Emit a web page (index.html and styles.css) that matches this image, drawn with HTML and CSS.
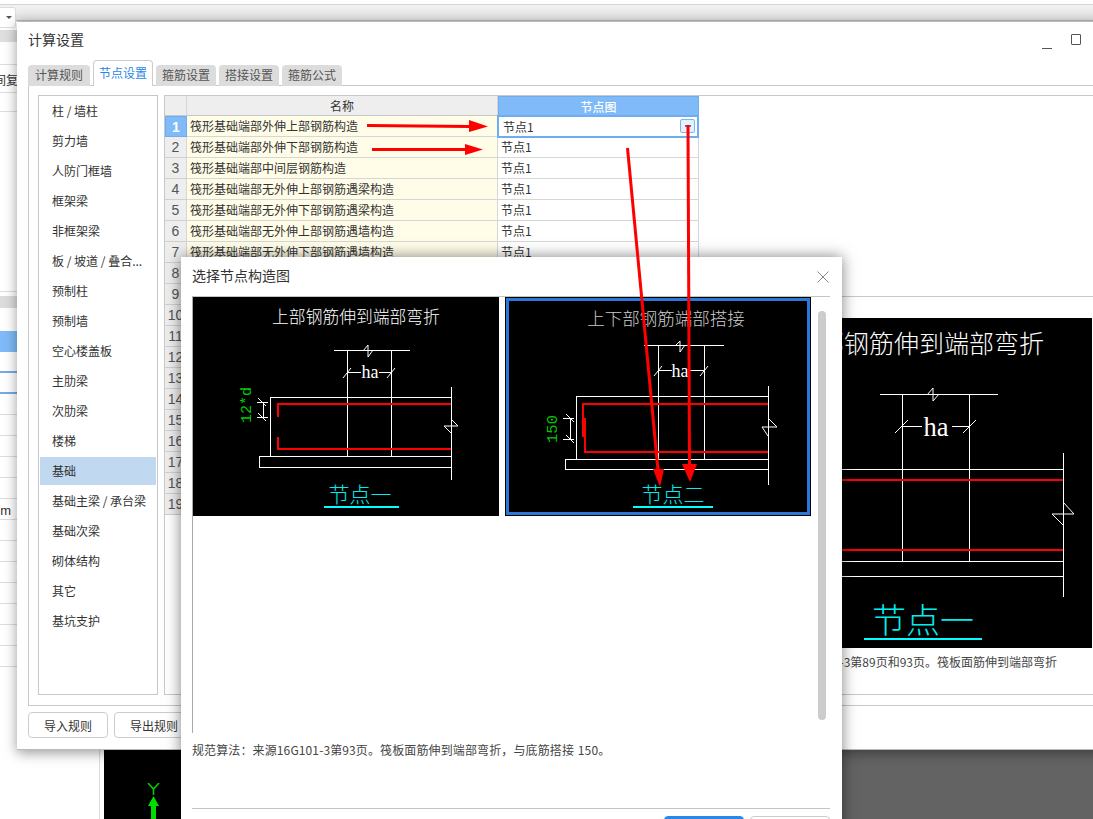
FILE: index.html
```html
<!DOCTYPE html>
<html lang="zh">
<head>
<meta charset="utf-8">
<title>计算设置</title>
<link rel="stylesheet" href="styles.css">
</head>
<body>
<div class="app">
  <div class="app-top"></div>
  <div class="app-dropdown"><span class="caret"></span></div>
  <div class="app-middle">
    <div class="side-table">
      <div class="st st-12"></div>
      <div class="st st-head"></div>
      <div class="st st-23"></div>
      <div class="st st-28">间复</div>
      <div class="st st-19"></div>
      <div class="st st-180"></div>
      <div class="st st-gap4"></div>
      <div class="st st-head2"></div>
      <div class="st st-gap23"></div>
      <div class="st st-sel"></div>
      <div class="st st-blue"></div>
      <div class="st st-blue"></div>
      <div class="st st-r"></div>
      <div class="st st-r"></div>
      <div class="st st-r"></div>
      <div class="st st-r"></div>
      <div class="st st-r"></div>
      <div class="st st-r st-unit">mm</div>
      <div class="st st-r"></div>
      <div class="st st-r"></div>
      <div class="st st-r"></div>
      <div class="st st-r"></div>
      <div class="st st-r"></div>
      <div class="st st-r"></div>
      <div class="st st-r"></div>
    </div>
  </div>
  <div class="app-bottom">
    <div class="bottom-left"></div>
    <div class="canvas-black">
      <svg class="axis" width="20" height="40" viewBox="0 0 20 40">
        <path class="axis-y" d="M4 0 L9.5 6 L15 0 M9.5 6 V12"/>
        <path class="axis-head" d="M9.5 13 L15 23 H12 V40 H7 V23 H4 Z"/>
      </svg>
    </div>
    <div class="canvas-gray"></div>
  </div>

  <section class="dlg-settings">
    <header class="dlg-head">
      <h1 class="dlg-title">计算设置</h1>
      <div class="win-btns">
        <span class="win-min"></span>
        <span class="win-max"></span>
      </div>
    </header>
    <nav class="tabs">
      <span class="tab">计算规则</span>
      <span class="tab tab-active">节点设置</span>
      <span class="tab">箍筋设置</span>
      <span class="tab">搭接设置</span>
      <span class="tab">箍筋公式</span>
    </nav>
    <div class="tab-body">
      <ul class="cats">
        <li>柱 / 墙柱</li>
        <li>剪力墙</li>
        <li>人防门框墙</li>
        <li>框架梁</li>
        <li>非框架梁</li>
        <li>板 / 坡道 / 叠合...</li>
        <li>预制柱</li>
        <li>预制墙</li>
        <li>空心楼盖板</li>
        <li>主肋梁</li>
        <li>次肋梁</li>
        <li>楼梯</li>
        <li class="cat-active">基础</li>
        <li>基础主梁 / 承台梁</li>
        <li>基础次梁</li>
        <li>砌体结构</li>
        <li>其它</li>
        <li>基坑支护</li>
      </ul>
      <div class="panel">
        <div class="grid">
          <div class="gh gh-corner"></div>
          <div class="gh">名称</div>
          <div class="gh gh-active">节点图</div>

          <div class="gn gn-active">1</div>
          <div class="gc">筏形基础端部外伸上部钢筋构造</div>
          <div class="gv gv-active">节点1<span class="more"><i></i><i></i></span></div>

          <div class="gn">2</div>
          <div class="gc">筏形基础端部外伸下部钢筋构造</div>
          <div class="gv">节点1</div>

          <div class="gn">3</div>
          <div class="gc">筏形基础端部中间层钢筋构造</div>
          <div class="gv">节点1</div>

          <div class="gn">4</div>
          <div class="gc">筏形基础端部无外伸上部钢筋遇梁构造</div>
          <div class="gv">节点1</div>

          <div class="gn">5</div>
          <div class="gc">筏形基础端部无外伸下部钢筋遇梁构造</div>
          <div class="gv">节点1</div>

          <div class="gn">6</div>
          <div class="gc">筏形基础端部无外伸上部钢筋遇墙构造</div>
          <div class="gv">节点1</div>

          <div class="gn">7</div>
          <div class="gc">筏形基础端部无外伸下部钢筋遇墙构造</div>
          <div class="gv">节点1</div>

          <div class="gn">8</div><div class="gc"></div><div class="gv"></div>
          <div class="gn">9</div><div class="gc"></div><div class="gv"></div>
          <div class="gn">10</div><div class="gc"></div><div class="gv"></div>
          <div class="gn">11</div><div class="gc"></div><div class="gv"></div>
          <div class="gn">12</div><div class="gc"></div><div class="gv"></div>
          <div class="gn">13</div><div class="gc"></div><div class="gv"></div>
          <div class="gn">14</div><div class="gc"></div><div class="gv"></div>
          <div class="gn">15</div><div class="gc"></div><div class="gv"></div>
          <div class="gn">16</div><div class="gc"></div><div class="gv"></div>
          <div class="gn">17</div><div class="gc"></div><div class="gv"></div>
          <div class="gn">18</div><div class="gc"></div><div class="gv"></div>
          <div class="gn">19</div><div class="gc"></div><div class="gv"></div>
        </div>
        <div class="preview">
          <svg class="pv-svg" width="250" height="330" viewBox="0 0 250 330">
            <text class="d-title" x="202" y="24" text-anchor="end" font-size="25">上部钢筋伸到端部弯折</text>
            <path class="d-w" d="M38 76.5 H156 M60.5 76 V243 M127.5 76 V243 M0 151.5 H221 M0 243.5 H221 M0 258.5 H221 M221.5 135 V279"/>
            <path class="d-w" d="M85 77 L91 70 V83 L97 76"/>
            <path class="d-w" d="M60 108.5 H80 M110 108.5 H127 M53 115 L66 102 M121 115 L134 102"/>
            <path class="d-w" d="M221 184 L232 196 H210 L221 207"/>
            <text class="d-ha" x="94" y="109" font-size="26.5">ha</text>
            <path class="d-r" d="M0 162 H221 M0 232 H221"/>
            <text class="d-cy" x="81" y="300" font-size="34">节点一</text>
            <path class="d-u" d="M22 321 H140"/>
          </svg>
          <p class="pv-note">规范算法：来源16G101-3第89页和93页。筏板面筋伸到端部弯折</p>
        </div>
      </div>
    </div>
    <footer class="dlg-foot">
      <button class="btn">导入规则</button>
      <button class="btn">导出规则</button>
    </footer>
  </section>

  <section class="dlg-node">
    <header class="node-head">
      <h2 class="node-title">选择节点构造图</h2>
      <svg class="node-close" width="12" height="12" viewBox="0 0 12 12"><path d="M.5 .5 L11.5 11.5 M11.5 .5 L.5 11.5"/></svg>
    </header>
    <div class="picker">
      <div class="pic">
        <svg width="306" height="219" viewBox="0 0 306 219">
          <text class="d-title" x="163" y="19" font-size="16.8">上部钢筋伸到端部弯折</text>
          <path class="d-w" d="M141 53.5 H217 M154.5 53 V159 M198.5 53 V159 M77.5 100 V159 M77 100.5 H258 M258.5 90 V183 M66.5 159.5 H258 M66.5 170.5 H258 M66.5 159 V171"/>
          <path class="d-w" d="M170 54 L175 48 V60 L180 53"/>
          <path class="d-w" d="M154 75.5 H168 M186 75.5 H198 M150 81 L158 71 M194 81 L202 71"/>
          <path class="d-w" d="M258 122 L265 129 H251 L258 136"/>
          <path class="d-w" d="M64 105.5 H75 M64 120.5 H75 M70.5 105 V120 M65 101 L73 109 M65 116 L73 124"/>
          <text class="d-ha" x="177" y="75" font-size="18">ha</text>
          <path class="d-r" d="M258 107 H85 V120 M258 152 H85 V140"/>
          <text class="d-gr" x="54" y="108" font-size="15" transform="rotate(-90 54 108)">12*d</text>
          <text class="d-cy" x="167" y="196" font-size="21">节点一</text>
          <path class="d-u" d="M131 210 H206"/>
        </svg>
      </div>
      <div class="pic pic-selected">
        <svg width="298" height="211" viewBox="3 4 298 211">
          <text class="d-title d-dim" x="160" y="20" font-size="17.5">上下部钢筋端部搭接</text>
          <path class="d-w" d="M138 48.5 H218 M152.5 48 V162 M198.5 48 V162 M70.5 99 V162 M70 99.5 H262 M262.5 89 V188 M59.5 162.5 H262 M59.5 172.5 H262 M59.5 162 V173"/>
          <path class="d-w" d="M169 49 L174 44 V55 L179 48"/>
          <path class="d-w" d="M152 73.5 H166 M184 73.5 H198 M148 79 L156 69 M194 79 L202 69"/>
          <path class="d-w" d="M262 121 L271 130 H256 L262 139"/>
          <path class="d-w" d="M57 121.5 H68 M57 142.5 H68 M64.5 121 V142 M60 117 L68 125 M60 138 L68 146"/>
          <text class="d-ha" x="174" y="74" font-size="18">ha</text>
          <path class="d-r" d="M262 107 H77 V140 M79 121 V155 H262"/>
          <text class="d-gr" x="47" y="132" font-size="15.5" transform="rotate(-90 47 132)">150</text>
          <text class="d-cy" x="167" y="196" font-size="21">节点二</text>
          <path class="d-u" d="M127 210 H207"/>
        </svg>
      </div>
      <div class="scroll-thumb"></div>
    </div>
    <p class="node-note">规范算法：来源16G101-3第93页。筏板面筋伸到端部弯折，与底筋搭接 150。</p>
    <footer class="node-foot">
      <button class="btn btn-primary">确定</button>
      <button class="btn">取消</button>
    </footer>
  </section>

  <svg class="annot" width="1093" height="819" viewBox="0 0 1093 819">
    <path class="a-line" d="M367 125.5 L470 126.5"/>
    <path class="a-head" d="M469 120 L488 126.5 L469 132 Z"/>
    <path class="a-line" d="M372 149.5 H466"/>
    <path class="a-head" d="M465 144 L483 149.5 L465 155 Z"/>
    <path class="a-line" d="M627.5 148 L658 470"/>
    <path class="a-head" d="M653 469 L664 469 L660 487 Z"/>
    <path class="a-line" d="M688 125 L689.5 465"/>
    <path class="a-head" d="M682 464 L697 464 L690 482 Z"/>
  </svg>
</div>
</body>
</html>
```
FILE: styles.css
```css
* { box-sizing: border-box; }
html, body { margin: 0; padding: 0; }
body {
  width: 1093px;
  height: 819px;
  overflow: hidden;
  background: #fff;
  font-family: "Noto Sans CJK SC", "Liberation Sans", sans-serif;
  font-size: 12px;
  color: #333;
}
h1, h2, p, ul { margin: 0; padding: 0; font-weight: 400; }

.app { position: relative; width: 1093px; height: 819px; overflow: hidden; }
.app-top {
  margin-top: 4px;
  height: 17px;
  border-top: 1px solid #d4d4d4;
  border-bottom: 1px solid #bbb;
  background: linear-gradient(#f2f2f2, #e2e2e2);
}
.app-dropdown {
  position: absolute;
  left: -6px;
  top: 7px;
  width: 22px;
  height: 21px;
  background: #fff;
  border: 1px solid #ddd;
  border-radius: 3px;
}
.caret {
  position: absolute;
  left: 11px;
  top: 8px;
  border-left: 3px solid transparent;
  border-right: 3px solid transparent;
  border-top: 3px solid #555;
}
.app-middle { height: 729px; }
.side-table { width: 17px; overflow: hidden; white-space: nowrap; }
.st { border-bottom: 1px solid #ddd; height: 21px; }
.st-12 { height: 10px; }
.st-head { height: 11px; background: #dfdfdf; border-bottom: 0; }
.st-23 { height: 23px; }
.st-28 { height: 28px; line-height: 30px; margin-left: -6px; font-size: 12px; }
.st-19 { height: 19px; }
.st-180 { height: 180px; }
.st-gap4 { height: 4px; border-bottom: 0; }
.st-head2 { height: 12px; background: #dcdcdc; border-bottom: 0; }
.st-gap23 { height: 23px; border-bottom: 0; }
.st-sel { background: #80baf8; border-bottom: 0; }
.st-blue { border-bottom: 2px solid #72ace6; }
.st-unit { text-align: right; line-height: 23px; margin-left: -12px; font-family: "Liberation Sans", sans-serif; font-size: 13px; padding-right: 6px; }

.app-bottom { display: flex; height: 69px; }
.bottom-left { width: 100px; border-right: 1px solid #ddd; }
.canvas-black { width: 80px; margin-left: 4px; background: #000; }
.canvas-gray { flex: 1; background: #636363; }
.axis { display: block; margin: 33px 0 0 40px; }
.axis-y { fill: none; stroke: #0c0; stroke-width: 1.6; }
.axis-head { fill: #0d0; }

/* settings window */
.dlg-settings {
  position: absolute;
  left: 17px;
  top: 21px;
  width: 1090px;
  height: 729px;
  background: #fff;
  border-top: 1px solid #bbb;
  border-bottom: 1px solid #bbb;
  box-shadow: 0 3px 12px rgba(0, 0, 0, .4);
  padding-left: 11px;
}
.dlg-head { display: flex; justify-content: space-between; height: 38px; padding-top: 6px; }
.dlg-title { font-size: 14px; line-height: 22px; color: #333; }
.win-btns { display: flex; align-items: flex-start; gap: 19px; padding: 6px 26px 0 0; margin-right: 0; }
.win-min { width: 10px; height: 1px; margin-top: 14px; background: #555; }
.win-max { width: 10px; height: 11px; border: 1px solid #555; border-radius: 1px; margin-top: 0; }
.tabs { display: flex; align-items: flex-end; gap: 3px; height: 26px; margin-bottom: -1px; position: relative; }
.tab {
  width: 60px;
  height: 21px;
  line-height: 20px;
  text-align: center;
  background: #dcdcdc;
  color: #555;
  border-radius: 4px 4px 0 0;
}
.tab:first-child { width: 62px; }
.tab-active {
  height: 26px;
  line-height: 23px;
  background: #fff;
  color: #2b88e8;
  border: 1px solid #ccc;
  border-bottom: 0;
  z-index: 1;
}
.tab-body {
  display: flex;
  gap: 6px;
  height: 621px;
  padding: 9px 0 10px 9px;
  border: 1px solid #c8c8c8;
  border-right: 0;
}
.cats {
  list-style: none;
  width: 120px;
  flex: none;
  border: 1px solid #c8c8c8;
  padding: 0 1px;
}
.cats li { height: 30px; line-height: 28px; padding-left: 12px; white-space: nowrap; border: 1px solid transparent; border-width: 1px 0; background-clip: padding-box; }
.cats .cat-active { background-color: #c0d8f0; }
.panel { flex: 1; display: flex; border: 1px solid #c8c8c8; border-right: 0; }
.grid {
  display: grid;
  grid-template-columns: 22px 311px 201px;
  grid-auto-rows: 21px;
  grid-template-rows: 20px;
  align-self: flex-start;
  flex: none;
}
.gh {
  background: #eee;
  border-right: 1px solid #d6d6d6;
  border-bottom: 1px solid #c8c8c8;
  line-height: 19px;
  text-align: center;
}
.gh-active { background: #80baf8; color: #fff; border: 1px solid #6caef0; border-bottom: 0; font-weight: 500; }
.gn {
  background: #eee;
  border-right: 1px solid #d6d6d6;
  border-bottom: 1px solid #d0d0d0;
  text-align: center;
  line-height: 20px;
  font-family: "Liberation Sans", sans-serif;
  font-size: 14px;
  color: #555;
}
.gn-active { background: #80baf8; color: #fff; font-weight: 700; border: 1px solid #6caef0; }
.gc {
  background: #fffde8;
  border-right: 1px solid #d6d6d6;
  border-bottom: 1px solid #d6d6d6;
  line-height: 19px;
  padding-left: 3px;
  white-space: nowrap;
  overflow: hidden;
}
.gv {
  border-right: 1px solid #d6d6d6;
  border-bottom: 1px solid #d6d6d6;
  line-height: 19px;
  padding-left: 3px;
}
.gv-active {
  position: relative;
  border: 2px solid #6caef0;
  margin: -1px 0 -1px -1px;
  padding-left: 4px;
  line-height: 19px;
}
.more {
  position: absolute;
  right: 2px;
  top: 2px;
  width: 15px;
  height: 14px;
  display: flex;
  align-items: center;
  justify-content: center;
  gap: 2px;
  background: #e8f0fa;
  border: 1px solid #7db4f0;
  border-radius: 2px;
}
.more i { width: 2px; height: 2px; background: #3a7fd8; }
.preview { flex: 1; margin-top: 200px; border-top: 1px solid #c8c8c8; padding-top: 21px; }
.pv-svg { display: block; margin-left: 143px; background: #000; }
.pv-note { margin-top: 5px; text-align: right; padding-right: 50px; white-space: nowrap; line-height: 18px; color: #444; }
.dlg-foot { display: flex; gap: 6px; padding-top: 6px; }
.btn {
  width: 80px;
  height: 26px;
  padding: 0;
  font: inherit;
  color: #333;
  background: #fff;
  border: 1px solid #ccc;
  border-radius: 4px;
}

/* node picker */
.dlg-node {
  position: absolute;
  left: 181px;
  top: 257px;
  width: 661px;
  height: 600px;
  background: #fff;
  box-shadow: 0 0 14px rgba(0, 0, 0, .5);
  padding: 0 12px 0 11px;
}
.node-head { display: flex; justify-content: space-between; align-items: center; height: 39px; padding: 0 1px 3px 0; }
.node-title { font-size: 14px; color: #333; }
.node-close { fill: none; stroke: #888; stroke-width: 1; margin-top: 3px; }
.picker {
  display: flex;
  align-items: flex-start;
  height: 437px;
  padding-left: 0;
  border-top: 1px solid #c4c4c4;
  border-left: 1px solid #aaa;
}
.pic { width: 306px; height: 219px; background: #000; flex: none; }
.pic svg { display: block; }
.pic-selected {
  width: 304px;
  height: 217px;
  margin: 1px 0 0 7px;
  border: 3px solid #2b78d8;
  box-shadow: 0 0 0 1px #000;
}
.scroll-thumb { width: 8px; height: 409px; margin: 14px 0 0 8px; border-radius: 4px; background: #ccc; flex: none; }
.node-note { height: 76px; padding-top: 8px; line-height: 18px; border-bottom: 1px solid #c4c4c4; color: #444; word-spacing: 1px; letter-spacing: .12px; }
.node-foot { display: flex; justify-content: flex-end; gap: 6px; padding-top: 7px; }
.btn-primary { background: #2b88e8; border-color: #2b88e8; color: #fff; }

/* drawings */
.d-w { fill: none; stroke: #fff; stroke-width: 1; }
.d-r { fill: none; stroke: #f00; stroke-width: 2; }
.d-u { fill: none; stroke: #0ff; stroke-width: 2; }
.d-title { fill: #fff; font-weight: 300; dominant-baseline: central; text-anchor: middle; }
.d-title[text-anchor="end"] { text-anchor: end; }
.d-dim { fill: #ccc; }
.d-ha { fill: #fff; font-family: "Liberation Serif", serif; dominant-baseline: central; text-anchor: middle; }
.d-gr { fill: #0c0; font-family: "Liberation Mono", monospace; dominant-baseline: central; text-anchor: middle; }
.d-cy { fill: #0ee; font-weight: 300; dominant-baseline: central; text-anchor: middle; }

/* hand-drawn red arrows over everything */
.annot { position: absolute; left: 0; top: 0; pointer-events: none; }
.a-line { fill: none; stroke: #f00; stroke-width: 3; }
.a-head { fill: #f00; }
```
